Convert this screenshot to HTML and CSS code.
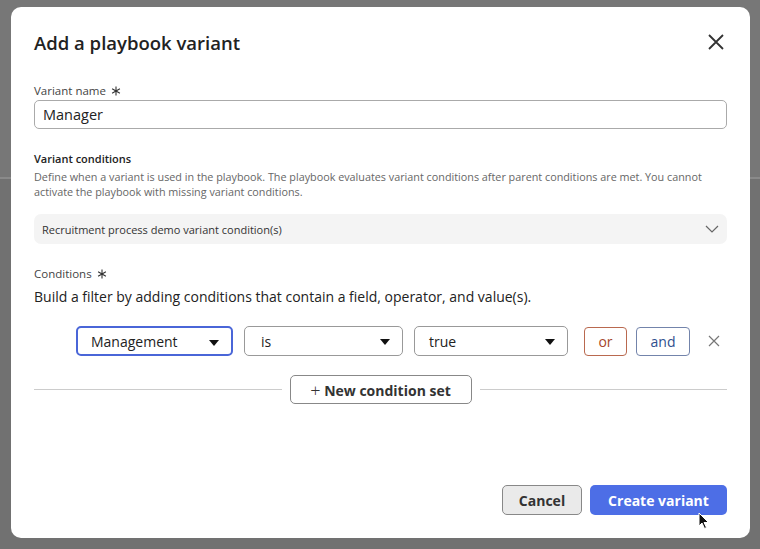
FILE: index.html
```html
<!DOCTYPE html>
<html lang="en">
<head>
    <meta charset="UTF-8">
    <meta name="viewport" content="width=device-width, initial-scale=1.0">
    <title>Add a playbook variant</title>
    <link rel="stylesheet" href="styles.css">
</head>
<body>
    <div class="backdrop">
        <div class="modal">
            <div class="modal-header">
                <h1>Add a playbook variant</h1>
                <button class="close" aria-label="Close">
                    <svg width="18" height="18" viewBox="0 0 18 18"><path d="M2 2L16 16M16 2L2 16" stroke="#333" stroke-width="1.8" fill="none"/></svg>
                </button>
            </div>

            <label class="field-label">Variant name <svg class="req" width="10" height="10" viewBox="0 0 10 10"><path d="M5 0.5V9.5M1.1 2.75L8.9 7.25M8.9 2.75L1.1 7.25" stroke="#333" stroke-width="1.1"/></svg></label>
            <input class="text-input" type="text" value="Manager">

            <div class="section-title">Variant conditions</div>
            <p class="section-desc">Define when a variant is used in the playbook. The playbook evaluates variant conditions after parent conditions are met. You cannot activate the playbook with missing variant conditions.</p>

            <div class="accordion">
                <span>Recruitment process demo variant condition(s)</span>
                <svg width="14" height="8" viewBox="0 0 14 8"><path d="M1 1L7 7L13 1" stroke="#666" stroke-width="1.2" fill="none"/></svg>
            </div>

            <label class="field-label cond-label">Conditions <svg class="req" width="10" height="10" viewBox="0 0 10 10"><path d="M5 0.5V9.5M1.1 2.75L8.9 7.25M8.9 2.75L1.1 7.25" stroke="#333" stroke-width="1.1"/></svg></label>
            <p class="hint">Build a filter by adding conditions that contain a field, operator, and value(s).</p>

            <div class="cond-row">
                <div class="select focus">Management<span class="caret"></span></div>
                <div class="select">is<span class="caret"></span></div>
                <div class="select">true<span class="caret"></span></div>
                <button class="logic or">or</button>
                <button class="logic and">and</button>
                <button class="remove" aria-label="Remove">
                    <svg width="12" height="12" viewBox="0 0 12 12"><path d="M1 1L11 11M11 1L1 11" stroke="#777" stroke-width="1.2" fill="none"/></svg>
                </button>
            </div>

            <div class="divider-row">
                <span class="rule"></span>
                <button class="new-set"><span class="plus">+</span> New condition set</button>
                <span class="rule"></span>
            </div>

            <div class="footer">
                <button class="btn cancel">Cancel</button>
                <button class="btn primary">Create variant</button>
                <svg class="cursor" width="12" height="18" viewBox="0 0 12 18"><path d="M1 1L1 14L4 11L6.5 16.5L8.5 15.5L6 10.5L10.5 10.5Z" fill="#111" stroke="#fff" stroke-width="1"/></svg>
            </div>
        </div>
    </div>
</body>
</html>
```

FILE: styles.css
```css
* {
    box-sizing: border-box;
}
body {
    margin: 0;
    font-family: "Open Sans", Arial, sans-serif;
    color: #222;
    background-color: #747474;
}
.backdrop {
    width: 760px;
    height: 549px;
    padding: 7px 10px 11px 11px;
    background: linear-gradient(to bottom, #777 0, #777 177px, #8a8a8a 177px, #8a8a8a 179px, #717171 179px);
}
.modal {
    position: relative;
    width: 739px;
    height: 531px;
    background-color: #fff;
    border-radius: 10px;
    padding: 22px 23px 0 23px;
}
.modal-header {
    display: flex;
    justify-content: space-between;
    align-items: center;
    height: 26px;
}
h1 {
    margin: 0;
    font-size: 18.5px;
    font-weight: 600;
    color: #222;
}
.close {
    border: none;
    background: none;
    padding: 0;
    margin-right: 2px;
    display: flex;
}
.field-label {
    display: block;
    font-size: 11.5px;
    color: #444;
    margin-top: 28px;
    line-height: 16px;
}
.req {
    margin-left: 2px;
    vertical-align: -1px;
}
.text-input {
    display: block;
    width: 100%;
    height: 29px;
    margin-top: 1px;
    border: 1px solid #aaa;
    border-radius: 5px;
    padding: 0 8px;
    font-family: inherit;
    font-size: 14.5px;
    color: #222;
}
.section-title {
    font-size: 11px;
    font-weight: 600;
    margin-top: 22px;
    color: #222;
}
.section-desc {
    margin: 4px 0 0;
    font-size: 10.8px;
    line-height: 14.5px;
    color: #666;
}
.accordion {
    display: flex;
    justify-content: space-between;
    align-items: center;
    height: 30px;
    margin-top: 15px;
    padding: 0 8px 0 8px;
    background-color: #f4f4f4;
    border-radius: 7px;
    font-size: 11px;
    color: #333;
}
.cond-label {
    margin-top: 22px;
}
.hint {
    margin: 5px 0 0;
    font-size: 14px;
    color: #222;
}
.cond-row {
    display: flex;
    align-items: center;
    margin-top: 20px;
    padding-left: 42px;
}
.select {
    position: relative;
    height: 30px;
    border: 1px solid #999;
    border-radius: 5px;
    padding: 0 14px;
    display: flex;
    align-items: center;
    font-size: 14px;
    color: #222;
    margin-right: 11px;
}
.select:nth-child(1) {
    width: 157px;
}
.select:nth-child(2) {
    width: 159px;
    padding-left: 16px;
}
.select:nth-child(3) {
    width: 154px;
    margin-right: 16px;
}
.select.focus {
    border: 2px solid #4a66d8;
    padding-left: 13px;
}
.caret {
    position: absolute;
    right: 12px;
    top: 12px;
    border-left: 5px solid transparent;
    border-right: 5px solid transparent;
    border-top: 6px solid #111;
}
.logic {
    height: 29px;
    border-radius: 4px;
    background: #fff;
    font-family: inherit;
    font-size: 14px;
    padding: 0;
    margin-right: 9px;
}
.logic.or {
    width: 43px;
    border: 1px solid #b9694f;
    color: #a6462b;
}
.logic.and {
    width: 54px;
    border: 1px solid #7384ab;
    color: #2f4f8e;
}
.remove {
    border: none;
    background: none;
    padding: 0;
    margin-left: 9px;
    display: flex;
}
.divider-row {
    display: flex;
    align-items: center;
    margin-top: 19px;
}
.rule {
    flex: 1;
    height: 1px;
    background-color: #ccc;
}
.new-set {
    width: 182px;
    height: 29px;
    margin: 0 8px;
    border: 1px solid #888;
    border-radius: 5px;
    background: #fff;
    font-family: inherit;
    font-size: 14px;
    font-weight: 700;
    color: #333;
    padding: 0;
}
.plus {
    font-weight: 300;
    font-size: 18px;
    vertical-align: -1px;
}
.footer {
    position: relative;
    display: flex;
    justify-content: flex-end;
    gap: 8px;
    margin-top: 81px;
}
.btn {
    height: 30px;
    border-radius: 5px;
    font-family: inherit;
    font-size: 14px;
    font-weight: 700;
    padding: 0;
}
.cancel {
    width: 80px;
    background-color: #eaeaea;
    border: 1px solid #888;
    color: #333;
}
.primary {
    width: 137px;
    background-color: #4d6ee6;
    border: none;
    color: #fff;
}
.cursor {
    position: absolute;
    right: 17px;
    top: 27px;
}
```
